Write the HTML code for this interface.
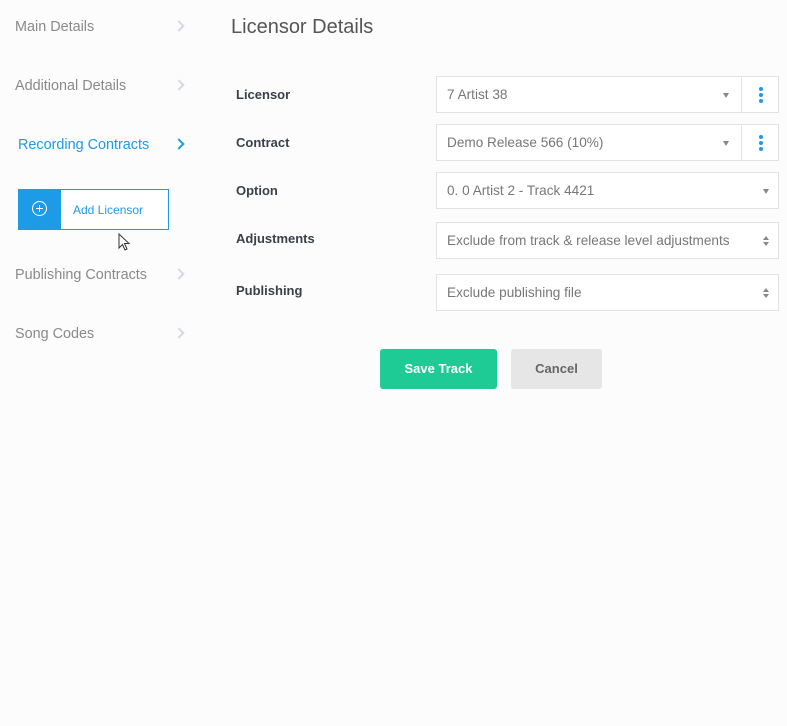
<!DOCTYPE html>
<html><head><style>
*{box-sizing:border-box;margin:0;padding:0}
body{width:787px;height:726px;background:#fcfcfc;font-family:"Liberation Sans",sans-serif;position:relative;overflow:hidden;color:#888}
.a{position:absolute}
.nav{font-size:14.4px;color:#8a8a8a;left:15px}
.chev{position:absolute;left:175px;width:8px;height:8px;border-right:2px solid #d5d8dc;border-top:2px solid #d5d8dc;transform:rotate(45deg)}
.lbl{left:236px;font-size:13px;font-weight:bold;color:#3a3f4a}
.box{position:absolute;left:436px;width:343px;height:37px;border:1px solid #e2e2e2;background:#fff;font-size:13.6px;color:#777;padding:0 10px;line-height:35px}
.tri{position:absolute;width:0;height:0;border-left:3.5px solid transparent;border-right:3.5px solid transparent;border-top:5px solid #888;top:16px}
.sep{position:absolute;left:304px;top:0;width:1px;height:35px;background:#e2e2e2}
.dots{position:absolute;left:322px;top:10px;width:4px}
.dots i{display:block;width:4px;height:4px;border-radius:2px;background:#1e9be6;margin-bottom:2px}
.ud{position:absolute;right:9px;top:13px}
.ud:before{content:"";display:block;border-left:3.5px solid transparent;border-right:3.5px solid transparent;border-bottom:4px solid #888;margin-bottom:2px}
.ud:after{content:"";display:block;border-left:3.5px solid transparent;border-right:3.5px solid transparent;border-top:4px solid #888}
</style></head><body>
<div class="a nav" style="top:19px">Main Details</div><div class="chev" style="top:22px"></div>
<div class="a nav" style="top:78px">Additional Details</div><div class="chev" style="top:81px"></div>
<div class="a nav" style="top:137px;left:18px;color:#1e9be6">Recording Contracts</div><div class="chev" style="top:140px;border-color:#1e9be6"></div>
<div class="a" style="left:18px;top:189px;width:151px;height:41px;border:1px solid #1e9be6;background:#fff">
 <div class="a" style="left:0;top:0;width:42px;height:39px;background:#1e9be6"></div>
 <div class="a" style="left:13px;top:11px;width:15px;height:15px;border:1.5px solid #fff;border-radius:50%"></div>
 <div class="a" style="left:17px;top:17.5px;width:7px;height:1.5px;background:#fff"></div>
 <div class="a" style="left:19.8px;top:14.5px;width:1.5px;height:7px;background:#fff"></div>
 <div class="a" style="left:54px;top:13px;font-size:12px;color:#1e9be6">Add Licensor</div>
</div>
<svg class="a" style="left:118px;top:233px" width="14" height="20" viewBox="0 0 14 20"><path d="M1 1 L1 15 L4.5 11.5 L7 17 L9 16 L6.5 10.5 L11 10.5 Z" fill="#fff" stroke="#333" stroke-width="1"/></svg>
<div class="a nav" style="top:267px">Publishing Contracts</div><div class="chev" style="top:270px"></div>
<div class="a nav" style="top:326px">Song Codes</div><div class="chev" style="top:329px"></div>

<div class="a" style="left:231px;top:16px;font-size:20px;color:#555;font-weight:300">Licensor Details</div>
<div class="a lbl" style="top:87px">Licensor</div>
<div class="a lbl" style="top:135px">Contract</div>
<div class="a lbl" style="top:183px">Option</div>
<div class="a lbl" style="top:231px">Adjustments</div>
<div class="a lbl" style="top:283px">Publishing</div>

<div class="box" style="top:76px">7 Artist 38<div class="tri" style="left:286px"></div><div class="sep"></div><div class="dots"><i></i><i></i><i></i></div></div>
<div class="box" style="top:124px">Demo Release 566 (10%)<div class="tri" style="left:286px"></div><div class="sep"></div><div class="dots"><i></i><i></i><i></i></div></div>
<div class="box" style="top:172px">0. 0 Artist 2 - Track 4421<div class="tri" style="left:326px"></div></div>
<div class="box" style="top:222px">Exclude from track &amp; release level adjustments<div class="ud"></div></div>
<div class="box" style="top:274px">Exclude publishing file<div class="ud"></div></div>

<div class="a" style="left:380px;top:349px;width:117px;height:40px;background:#1ecb94;border-radius:3px;color:#fff;font-weight:bold;font-size:13px;text-align:center;line-height:40px">Save Track</div>
<div class="a" style="left:511px;top:349px;width:91px;height:40px;background:#e6e6e6;border-radius:3px;color:#666;font-weight:bold;font-size:13px;text-align:center;line-height:40px">Cancel</div>
</body></html>
